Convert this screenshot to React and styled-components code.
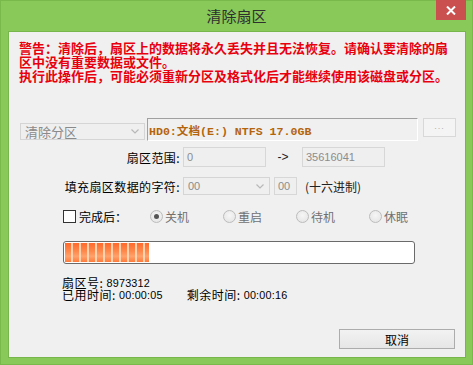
import React from "react";
import styled, { createGlobalStyle } from "styled-components";

const Global = createGlobalStyle`
  html, body { margin: 0; padding: 0; overflow: hidden; }
  body { font-family: "Noto Sans CJK SC", "Liberation Sans", sans-serif; }
`;

const CJK = `"Noto Sans CJK SC", "Liberation Sans", sans-serif`;
const NUM = `"Liberation Sans", "Noto Sans CJK SC", sans-serif`;

const Window = styled.div`
  width: 473px;
  height: 365px;
  background: #88c95a;
  display: flex;
  flex-direction: column;
  box-sizing: border-box;
  border: 1px solid #79b94c;
`;

const TitleBar = styled.div`
  height: 30px;
  position: relative;
  display: flex;
  align-items: center;
  justify-content: center;
`;

const Title = styled.div`
  font-family: ${CJK};
  font-size: 15px;
  color: #2f2f2f;
  line-height: 30px;
  margin-top: -1px;
`;

const CloseButton = styled.div`
  position: absolute;
  top: -1px;
  right: 6px;
  width: 30px;
  height: 20px;
  background: #c9504f;
  display: flex;
  align-items: center;
  justify-content: center;
`;

const Body = styled.div`
  flex: 1;
  margin: 0 6px 6px 7px;
  background: #f0f0f0;
  border: 1px solid #76b64a;
  box-sizing: border-box;
  display: flex;
  flex-direction: column;
  padding-top: 9px;
  font-family: ${CJK};
  font-size: 12px;
  color: #000;
`;

const Warning = styled.div`
  padding-left: 10px;
  color: #e8000e;
  font-weight: bold;
  font-size: 13px;
  line-height: 14px;
  white-space: nowrap;
`;

const TargetRow = styled.div`
  display: flex;
  align-items: flex-start;
  margin-top: 35px;
  padding-left: 11px;
  height: 23px;
`;

const ComboBox = styled.div`
  box-sizing: border-box;
  width: ${(p) => p.$w}px;
  height: ${(p) => p.$h}px;
  margin-top: ${(p) => p.$top || 0}px;
  border: 1px solid #d5d5d5;
  background: #efefef;
  color: ${(p) => p.$color || "#8a8a8a"};
  font-family: ${(p) => (p.$num ? NUM : CJK)};
  font-size: ${(p) => (p.$num ? 11 : 13)}px;
  display: flex;
  align-items: center;
  justify-content: space-between;
  padding: 0 5px 0 4px;
  line-height: 1;
`;

const TargetField = styled.div`
  box-sizing: border-box;
  width: 271px;
  height: 23px;
  border-top: 1px solid #a0a0a0;
  border-left: 1px solid #a0a0a0;
  border-right: 1px solid #ffffff;
  border-bottom: 1px solid #ffffff;
  background: #f0f0f0;
  margin-left: 2px;
  display: flex;
  align-items: center;
  padding-left: 1px;
  font-family: "Liberation Mono", "Noto Sans CJK SC", monospace;
  font-weight: bold;
  font-size: 11.6px;
  color: #b4650c;
  white-space: pre;
`;

const BrowseButton = styled.div`
  box-sizing: border-box;
  width: 33px;
  height: 19px;
  margin-left: 5px;
  border: 1px solid #d8d8d8;
  background: #f4f4f4;
  color: #b0b0b0;
  font-family: ${NUM};
  font-size: 9px;
  letter-spacing: 1px;
  display: flex;
  align-items: center;
  justify-content: center;
  padding-bottom: 3px;
`;

const FieldRow = styled.div`
  display: flex;
  align-items: center;
  margin-top: ${(p) => p.$top}px;
  height: ${(p) => p.$h}px;
`;

const Label = styled.div`
  width: 171px;
  margin-right: 3px;
  text-align: right;
  font-size: 12px;
  white-space: nowrap;
  letter-spacing: 0.4px;
`;

const Field = styled.div`
  box-sizing: border-box;
  width: ${(p) => p.$w}px;
  height: ${(p) => p.$h}px;
  margin-left: ${(p) => p.$ml || 0}px;
  border: 1px solid #d7d7d7;
  background: #efefef;
  color: #8c8c8c;
  font-family: ${NUM};
  font-size: 11px;
  display: flex;
  align-items: center;
  padding-left: 3px;
`;

const Arrow = styled.div`
  width: 36px;
  text-align: center;
  font-family: ${NUM};
  font-size: 12px;
  color: #222;
  padding-right: 2px;
  box-sizing: border-box;
`;

const Hint = styled.div`
  margin-left: 8px;
  font-size: 12px;
  color: #222;
`;

const OptionsRow = styled.div`
  display: flex;
  align-items: center;
  margin-top: 14px;
  height: 14px;
  padding-left: 54px;
`;

const CheckLabel = styled.div`
  width: 87px;
  display: flex;
  align-items: center;
  gap: 3px;
  color: #000;
  font-size: 12px;
`;

const CheckBox = styled.div`
  box-sizing: border-box;
  width: 13px;
  height: 13px;
  border: 1px solid #333;
  background: #fff;
`;

const RadioItem = styled.div`
  width: 73px;
  display: flex;
  align-items: center;
  gap: 2px;
  color: #707070;
  font-size: 12px;
`;

const RadioDot = styled.div`
  box-sizing: border-box;
  width: 13px;
  height: 13px;
  border-radius: 50%;
  border: 1px solid #bcbcbc;
  background: radial-gradient(circle at 50% 40%, #f6f6f6 0%, #e2e2e2 100%);
  display: flex;
  align-items: center;
  justify-content: center;
  &::after {
    content: "";
    display: ${(p) => (p.$checked ? "block" : "none")};
    width: 5px;
    height: 5px;
    border-radius: 50%;
    background: #555;
  }
`;

const Progress = styled.div`
  box-sizing: border-box;
  margin: 18px 0 0 54px;
  width: 352px;
  height: 23px;
  border: 1px solid #6a6a6a;
  border-radius: 3px;
  background: #fff;
  padding: 1px;
  display: flex;
`;

const ProgressFill = styled.div`
  height: 100%;
  background:
    repeating-linear-gradient(to right, transparent 0 6px, rgba(255, 222, 190, 0.85) 6px 8px),
    linear-gradient(to bottom, #ff6a2c 0%, #ff8a4e 45%, #ffa26c 70%, #ff7a3c 100%);
`;

const Info = styled.div`
  margin: 13px 0 0 53px;
  font-size: 12px;
  line-height: 12px;
  letter-spacing: 0.5px;
  color: #000;
`;

const InfoLine = styled.div`
  display: flex;
  white-space: pre;
`;

const Num = styled.span`
  font-family: ${NUM};
  font-size: 10.8px;
  letter-spacing: 0.2px;
`;

const Spacer = styled.span`
  display: inline-block;
  width: ${(p) => p.$w}px;
`;

const Footer = styled.div`
  display: flex;
  justify-content: flex-end;
  margin-top: 28px;
  padding-right: 10px;
`;

const Button = styled.div`
  box-sizing: border-box;
  width: 116px;
  height: 20px;
  border: 1px solid #acacac;
  background: linear-gradient(to bottom, #f2f2f2, #e6e6e6);
  display: flex;
  align-items: center;
  justify-content: center;
  font-size: 12px;
  color: #000;
`;

const Chevron = () => (
  <svg width="8" height="5" viewBox="0 0 8 5">
    <polyline points="0.5,0.5 4,4 7.5,0.5" fill="none" stroke="#b8b8b8" strokeWidth="1.2" />
  </svg>
);

const CloseGlyph = () => (
  <svg width="10" height="9" viewBox="0 0 10 9">
    <path d="M1 0.5 L9 8.5 M9 0.5 L1 8.5" stroke="#fff" strokeWidth="2" />
  </svg>
);

export default function App() {
  const progress = 84 / 348;
  return (
    <>
      <Global />
      <Window>
        <TitleBar>
          <Title>清除扇区</Title>
          <CloseButton>
            <CloseGlyph />
          </CloseButton>
        </TitleBar>
        <Body>
          <Warning>
            <div>警告：清除后，扇区上的数据将永久丢失并且无法恢复。请确认要清除的扇</div>
            <div>区中没有重要数据或文件。</div>
            <div>执行此操作后，可能必须重新分区及格式化后才能继续使用该磁盘或分区。</div>
          </Warning>
          <TargetRow>
            <ComboBox $w={125} $h={17} $top={5}>
              <span>清除分区</span>
              <Chevron />
            </ComboBox>
            <TargetField>HD0:文档(E:) NTFS 17.0GB</TargetField>
            <BrowseButton>...</BrowseButton>
          </TargetRow>
          <FieldRow $top={6} $h={20}>
            <Label>扇区范围:</Label>
            <Field $w={83} $h={20}>0</Field>
            <Arrow>-&gt;</Arrow>
            <Field $w={83} $h={20}>35616041</Field>
          </FieldRow>
          <FieldRow $top={10} $h={18}>
            <Label>填充扇区数据的字符:</Label>
            <ComboBox $w={87} $h={18} $num>
              <span>00</span>
              <Chevron />
            </ComboBox>
            <Field $w={23} $h={18} $ml={4}>00</Field>
            <Hint>(十六进制)</Hint>
          </FieldRow>
          <OptionsRow>
            <CheckLabel>
              <CheckBox />
              <span>完成后：</span>
            </CheckLabel>
            <RadioItem>
              <RadioDot $checked />
              <span>关机</span>
            </RadioItem>
            <RadioItem>
              <RadioDot />
              <span>重启</span>
            </RadioItem>
            <RadioItem>
              <RadioDot />
              <span>待机</span>
            </RadioItem>
            <RadioItem>
              <RadioDot />
              <span>休眠</span>
            </RadioItem>
          </OptionsRow>
          <Progress>
            <ProgressFill style={{ width: `${progress * 100}%` }} />
          </Progress>
          <Info>
            <InfoLine>
              扇区号: <Num>8973312</Num>
            </InfoLine>
            <InfoLine>
              已用时间: <Num>00:00:05</Num>
              <Spacer $w={24} />
              剩余时间: <Num>00:00:16</Num>
            </InfoLine>
          </Info>
          <Footer>
            <Button>取消</Button>
          </Footer>
        </Body>
      </Window>
    </>
  );
}
